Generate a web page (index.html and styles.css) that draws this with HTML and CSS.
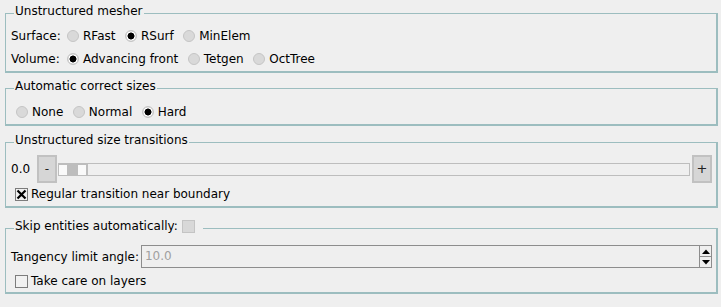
FILE: index.html
```html
<!DOCTYPE html>
<html lang="en">
<head>
<meta charset="utf-8">
<title>Mesher options</title>
<link rel="stylesheet" href="styles.css">
</head>
<body>
<div class="panel">
  <fieldset class="group g1">
    <legend>Unstructured mesher</legend>
    <div class="row">
      <span class="lbl">Surface:</span>
      <span class="opt"><span class="radio"></span>RFast</span>
      <span class="opt"><span class="radio on"></span>RSurf</span>
      <span class="opt"><span class="radio"></span>MinElem</span>
    </div>
    <div class="row">
      <span class="lbl">Volume:</span>
      <span class="opt"><span class="radio on"></span>Advancing front</span>
      <span class="opt"><span class="radio"></span>Tetgen</span>
      <span class="opt"><span class="radio"></span>OctTree</span>
    </div>
  </fieldset>

  <fieldset class="group g2">
    <legend>Automatic correct sizes</legend>
    <div class="row indent">
      <span class="opt"><span class="radio"></span>None</span>
      <span class="opt"><span class="radio"></span>Normal</span>
      <span class="opt"><span class="radio on"></span>Hard</span>
    </div>
  </fieldset>

  <fieldset class="group g3">
    <legend>Unstructured size transitions</legend>
    <div class="slider-row">
      <span class="val">0.0</span>
      <span class="btn">-</span>
      <div class="track">
        <div class="handle"><span class="grip"></span><span class="grip second"></span></div>
      </div>
      <span class="btn plus">+</span>
    </div>
    <div class="row check-row">
      <span class="check checked">
        <svg width="11" height="11" viewBox="0 0 11 11"><path d="M1.5 1.5 L9.5 9.5 M9.5 1.5 L1.5 9.5" stroke="#000" stroke-width="2.2" fill="none"/></svg>
      </span>
      <span>Regular transition near boundary</span>
    </div>
  </fieldset>

  <fieldset class="group g4">
    <legend>Skip entities automatically: <span class="check disabled"></span></legend>
    <div class="spin-row">
      <span class="spin-lbl">Tangency limit angle:</span>
      <div class="spinbox">
        <span class="spin-val">10.0</span>
        <div class="spin-btns">
          <span class="spin-btn">
            <svg width="8" height="5" viewBox="0 0 8 5"><path d="M0 5 L4 0.5 L8 5 Z" fill="#000"/></svg>
          </span>
          <span class="spin-btn down">
            <svg width="8" height="5" viewBox="0 0 8 5"><path d="M0 0 L8 0 L4 4.5 Z" fill="#000"/></svg>
          </span>
        </div>
      </div>
    </div>
    <div class="row check-row">
      <span class="check"></span>
      <span>Take care on layers</span>
    </div>
  </fieldset>
</div>
</body>
</html>
```

FILE: styles.css
```css
html, body {
  margin: 0;
  height: 100%;
  overflow: hidden;
}

body {
  background: #efefef;
  color: #000;
  font-family: "DejaVu Sans", "Liberation Sans", sans-serif;
  font-size: 12px;
  line-height: 14px;
}

.panel {
  padding: 4px 0 0 5px;
  width: 713px;
}

.group {
  margin: 0;
  padding: 0 4px 0 5px;
  border-style: solid;
  border-color: #9cbdbf;
  border-width: 1px 2px 2px 1px;
  min-width: 0;
}

.group legend {
  margin-left: 3px;
  padding: 0 1px 5px 1px;
  line-height: 14px;
}

.row {
  display: flex;
  align-items: center;
  height: 22px;
  white-space: nowrap;
}

.g1 {
  padding-top: 2px;
  padding-bottom: 1px;
}

.g1 .row + .row {
  margin-top: 1px;
}

.lbl {
  width: 56px;
}

.opt {
  display: flex;
  align-items: center;
  margin-right: 9.5px;
}

.radio {
  box-sizing: border-box;
  width: 12px;
  height: 12px;
  margin-right: 4px;
  border-radius: 50%;
  border: 1px solid #c5c5c5;
  background: #d9d9d9;
}

.radio.on {
  background: radial-gradient(circle, #000 0 3.3px, #fff 3.7px 4.3px, #d9d9d9 4.7px);
}

.g2 {
  margin-top: 6px;
  padding-top: 3px;
  padding-bottom: 1px;
}

.indent {
  margin-left: 5px;
}

.g3 {
  margin-top: 7px;
  padding-top: 3px;
  padding-bottom: 1px;
}

.slider-row {
  display: flex;
  align-items: center;
  height: 28px;
}

.val {
  width: 26px;
}

.btn {
  box-sizing: border-box;
  width: 20px;
  height: 28px;
  border: 2px solid #c1c1c1;
  background: #d6d6d6;
  display: flex;
  align-items: center;
  justify-content: center;
  font-size: 12px;
  color: #222;
}

.btn.plus {
  font-size: 13px;
  color: #222;
}

.track {
  flex: 1;
  box-sizing: border-box;
  height: 13px;
  margin: 0 2px 0 1px;
  border: 1px solid #bdbdbd;
  background: #efefef;
}

.handle {
  display: flex;
  width: 29px;
  height: 11px;
  background: #bdbdbd;
}

.grip {
  width: 8px;
  height: 10px;
  margin-top: 1px;
  background: #fafafa;
}

.grip.second {
  margin-left: 11px;
}

.check-row {
  padding-left: 4px;
}

.check {
  box-sizing: border-box;
  display: inline-flex;
  align-items: center;
  justify-content: center;
  width: 13px;
  height: 13px;
  margin-right: 3px;
  border: 1px solid #7c7c7c;
  background: #f1f1f1;
}

.check.disabled {
  vertical-align: top;
  margin: 1px 0 0 0;
  border-color: #c4c4c4;
  background: #d8d8d8;
}

.g4 legend {
  padding-right: 8px;
}

.g4 {
  margin-top: 11px;
  padding-top: 7px;
  padding-bottom: 0;
}

.spin-row {
  display: flex;
  align-items: center;
  height: 23px;
  margin-bottom: 2px;
}

.spin-lbl {
  margin-right: 2px;
  white-space: nowrap;
}

.spinbox {
  flex: 1;
  box-sizing: border-box;
  height: 23px;
  display: flex;
  border: 1px solid #8d8d8d;
  background: #efefef;
}

.spin-val {
  flex: 1;
  padding-left: 3px;
  color: #a0a0a0;
  line-height: 21px;
}

.spin-btns {
  width: 11px;
  display: flex;
  flex-direction: column;
  border-left: 1px solid #8d8d8d;
}

.spin-btn {
  flex: 1;
  display: flex;
  align-items: center;
  justify-content: center;
}

.spin-btn.down {
  border-top: 1px solid #8d8d8d;
}
```
